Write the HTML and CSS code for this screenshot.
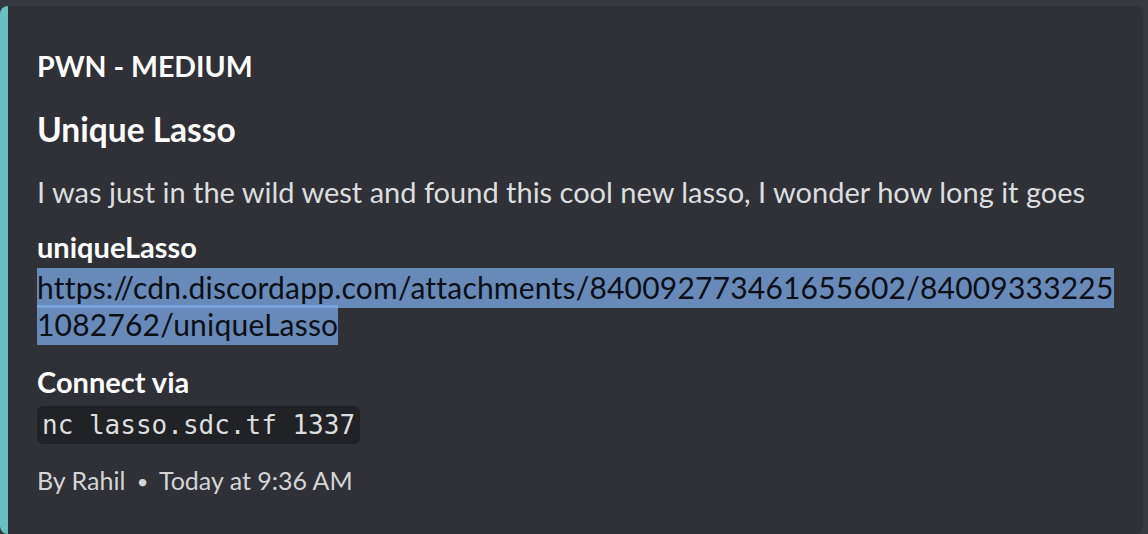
FILE: index.html
```html
<!DOCTYPE html>
<html lang="en">
<head>
<meta charset="utf-8">
<title>Unique Lasso</title>
<link rel="stylesheet" href="styles.css">
</head>
<body>
<div class="embed">
  <div class="author">PWN - MEDIUM</div>
  <div class="title">Unique Lasso</div>
  <div class="desc">I was just in the wild west and found this cool new lasso, I wonder how long it goes</div>
  <div class="field">
    <div class="field-name">uniqueLasso</div>
    <div class="field-value"><span class="sel">https://cdn.discordapp.com/attachments/840092773461655602/84009333225<br>1082762/uniqueLasso</span></div>
  </div>
  <div class="field">
    <div class="field-name conn">Connect via</div>
    <div class="field-value"><code class="code">nc lasso.sdc.tf 1337</code></div>
  </div>
  <div class="footer">By Rahil <span class="dot">•</span> Today at 9:36 AM</div>
</div>
</body>
</html>
```

FILE: styles.css
```css
html, body {
  margin: 0;
  padding: 0;
  background: #36393f;
  height: 100%;
  overflow: hidden;
}
body {
  font-family: Lato, "Noto Sans", sans-serif;
}
.embed {
  margin-top: 6px;
  width: 1143px;
  height: 528px;
  box-sizing: border-box;
  background: #2f3136;
  border-left: 8px solid #67c1c0;
  border-radius: 8px;
  padding: 42px 20px 0 29px;
}
.author {
  color: #ffffff;
  font-weight: 700;
  font-size: 28.5px;
  line-height: 36px;
}
.title {
  margin-top: 25px;
  color: #ffffff;
  font-weight: 700;
  font-size: 33.5px;
  line-height: 40px;
}
.desc {
  margin-top: 25px;
  color: #dcddde;
  font-size: 29px;
  line-height: 36px;
}
.field-name {
  margin-top: 20px;
  color: #ffffff;
  font-weight: 700;
  font-size: 29px;
  line-height: 34px;
}
.field-value {
  margin-top: 5px;
  font-size: 30px;
  line-height: 37px;
  color: #dcddde;
}
.sel {
  background: rgba(128, 176, 240, 0.7);
  color: #0b0f16;
  letter-spacing: 0.2px;
  padding: 1px 0 3px;
}
.conn {
  margin-top: 22px;
}
.code {
  display: inline-block;
  background: #202225;
  border-radius: 6px;
  font-family: "DejaVu Sans Mono", monospace;
  font-size: 26px;
  line-height: 38px;
  padding: 0 5px;
  color: #dcddde;
}
.footer {
  margin-top: 20px;
  color: #d4d5d7;
  font-size: 25px;
  line-height: 32px;
}
.dot {
  margin: 0 5px;
  font-size: 20px;
  vertical-align: 1px;
}
```
